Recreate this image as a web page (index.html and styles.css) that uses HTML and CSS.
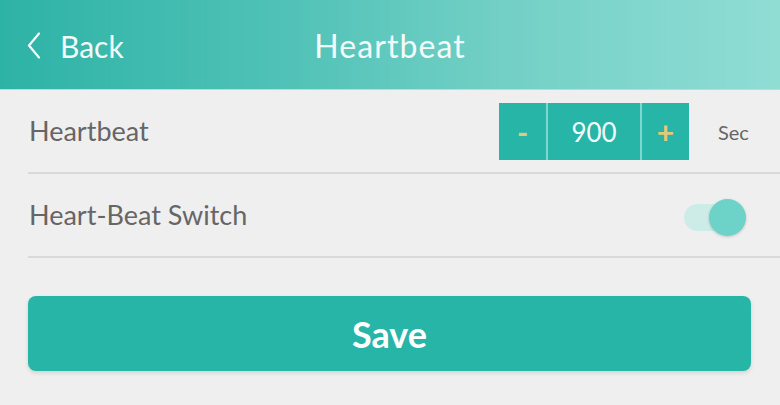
FILE: index.html
```html
<!DOCTYPE html>
<html>
<head>
<meta charset="utf-8">
<link rel="stylesheet" href="styles.css">
</head>
<body>
<header class="topbar">
  <div class="back">
    <svg class="chev" width="16" height="28" viewBox="0 0 16 28"><path d="M13 1.5 L3 13.5 L13 25.5" fill="none" stroke="#f2fbfa" stroke-width="2.2" stroke-linecap="round" stroke-linejoin="round"/></svg>
    <span class="back-text">Back</span>
  </div>
  <h1 class="title">Heartbeat</h1>
</header>
<main class="content">
  <div class="row">
    <span class="label">Heartbeat</span>
    <div class="controls">
      <div class="stepper">
        <span class="step minus">-</span>
        <span class="value">900</span>
        <span class="step plus">+</span>
      </div>
      <span class="unit">Sec</span>
    </div>
  </div>
  <div class="row">
    <span class="label">Heart-Beat Switch</span>
    <div class="toggle"><span class="track"></span><span class="knob"></span></div>
  </div>
  <button class="save">Save</button>
</main>
</body>
</html>
```

FILE: styles.css
```css
* { box-sizing: border-box; }
html, body { margin: 0; padding: 0; }
body {
  width: 780px;
  height: 405px;
  background: #efefef;
  font-family: Lato, "Noto Sans", sans-serif;
  overflow: hidden;
}
.topbar {
  height: 90px;
  background: linear-gradient(90deg, #2db3a6 0%, #4fc1b6 35%, #73d0c6 65%, #90ddd4 100%);
  display: flex;
  align-items: center;
  position: relative;
  border-bottom: 1px solid #a8e3dc;
}
.back {
  display: flex;
  align-items: center;
  padding-left: 26px;
  gap: 18px;
  color: #f2fbfa;
  margin-top: 2px;
}
.back-text { font-size: 30px; }
.title {
  position: absolute;
  left: 0; right: 0;
  text-align: center;
  margin: 0;
  font-weight: 400;
  font-size: 32px;
  color: #f2fbfa;
  letter-spacing: 1.1px;
  pointer-events: none;
  margin-top: 1px;
}
.content {
  padding-left: 28px;
}
.row {
  height: 84px;
  display: flex;
  align-items: center;
  justify-content: space-between;
  border-bottom: 2px solid #d9d9d9;
}
.label {
  font-size: 27px;
  color: #666;
  padding-left: 1px;
  margin-top: -2px;
}
.controls {
  display: flex;
  align-items: center;
  margin-top: 1px;
}
.stepper {
  display: flex;
  height: 57px;
  gap: 2px;
  background: #7fd8cf;
}
.step, .value {
  background: #26b5a7;
  display: flex;
  align-items: center;
  justify-content: center;
}
.step {
  width: 47px;
  color: #e3c97a;
  font-size: 30px;
  font-weight: 700;
}
.value {
  width: 92px;
  color: #f4fbfa;
  font-size: 26px;
}
.unit {
  margin-left: 29px;
  width: 62px;
  font-size: 20px;
  color: #666;
}
.toggle {
  position: relative;
  width: 64px;
  height: 40px;
  margin-right: 32px;
  margin-top: 3px;
}
.track {
  position: absolute;
  left: 0; top: 7px;
  width: 46px; height: 27px;
  border-radius: 13.5px;
  background: #cdebe7;
}
.knob {
  position: absolute;
  left: 25px; top: 2px;
  width: 37px; height: 37px;
  border-radius: 50%;
  background: #6dd3c8;
  box-shadow: 0 1px 3px rgba(0,0,0,0.18);
}
.save {
  display: block;
  margin-top: 38px;
  width: 723px;
  height: 75px;
  border: none;
  border-radius: 8px;
  background: #27b5a8;
  color: #fff;
  font-family: Lato, "Noto Sans", sans-serif;
  font-weight: 700;
  font-size: 36px;
  box-shadow: 0 2px 4px rgba(0,0,0,0.12);
}
```
